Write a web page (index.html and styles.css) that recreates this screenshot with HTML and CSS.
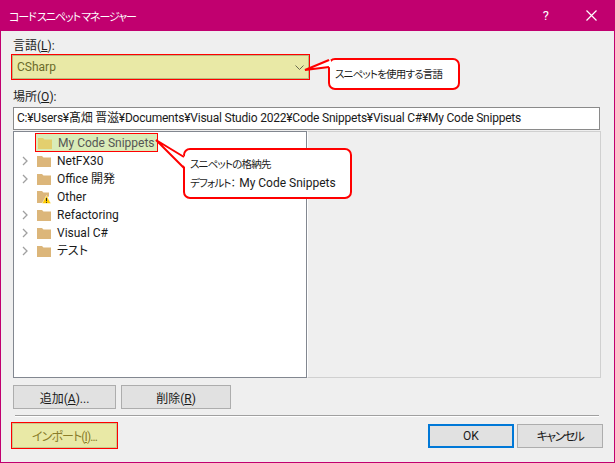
FILE: index.html
```html
<!DOCTYPE html>
<html>
<head>
    <title>コードスニペットマネージャー</title>
    <link rel="stylesheet" href="styles.css">
</head>
<body>
    <div class="window">
        <div class="title-bar">
            <span class="title">コード スニペット マネージャー</span>
            <span class="help">?</span>
            <svg class="close" width="11" height="11" viewBox="0 0 11 11"><path d="M0.5 0.5L10.5 10.500M10.5 0.5L0.5 10.500" stroke="#fff" stroke-width="1.2" fill="none"/></svg>
        </div>
        <div class="content">
            <div class="field-label">言語(<u>L</u>):</div>
            <div class="combo">
                <span>CSharp</span>
                <svg width="9" height="5" viewBox="0 0 9 5"><path d="M0.5 0.5L4.5 4.500L8.500 0.5" stroke="#6a6a50" fill="none"/></svg>
            </div>
            <div class="field-label place-label">場所(<u>O</u>):</div>
            <div class="path-box">C:¥Users¥髙畑 晋滋¥Documents¥Visual Studio 2022¥Code Snippets¥Visual C#¥My Code Snippets</div>
            <div class="panes">
                <div class="tree">
                    <div class="tree-row">
                        <span class="arrow"></span>
                        <span class="selected-node">
                            <svg class="folder" width="14" height="12" viewBox="0 0 14 12"><path d="M0 1H5L6.500 2.500H14V12H0Z" fill="#e3cf6e"/></svg>
                            My Code Snippets
                        </span>
                    </div>
                    <div class="tree-row">
                        <svg class="arrow" width="6" height="10" viewBox="0 0 6 10"><path d="M1 1L5 5L1 9" stroke="#a0a0a0" stroke-width="1.300" fill="none"/></svg>
                        <svg class="folder" width="14" height="12" viewBox="0 0 14 12"><path d="M0 1H5L6.500 2.500H14V12H0Z" fill="#dcb67a"/></svg>
                        <span>NetFX30</span>
                    </div>
                    <div class="tree-row">
                        <svg class="arrow" width="6" height="10" viewBox="0 0 6 10"><path d="M1 1L5 5L1 9" stroke="#a0a0a0" stroke-width="1.300" fill="none"/></svg>
                        <svg class="folder" width="14" height="12" viewBox="0 0 14 12"><path d="M0 1H5L6.500 2.500H14V12H0Z" fill="#dcb67a"/></svg>
                        <span>Office 開発</span>
                    </div>
                    <div class="tree-row">
                        <span class="arrow"></span>
                        <svg class="folder" width="14" height="14" viewBox="0 0 14 14"><path d="M0 1H5L6.500 2.500H12V6L7 13H0Z" fill="#dcb67a"/><path d="M9.500 5.500L14 13.500H5Z" fill="#fc0" stroke="#fff" stroke-width="0.5"/><path d="M9.500 8V11M9.500 11.800V12.800" stroke="#222" fill="none"/></svg>
                        <span>Other</span>
                    </div>
                    <div class="tree-row">
                        <svg class="arrow" width="6" height="10" viewBox="0 0 6 10"><path d="M1 1L5 5L1 9" stroke="#a0a0a0" stroke-width="1.300" fill="none"/></svg>
                        <svg class="folder" width="14" height="12" viewBox="0 0 14 12"><path d="M0 1H5L6.500 2.500H14V12H0Z" fill="#dcb67a"/></svg>
                        <span>Refactoring</span>
                    </div>
                    <div class="tree-row">
                        <svg class="arrow" width="6" height="10" viewBox="0 0 6 10"><path d="M1 1L5 5L1 9" stroke="#a0a0a0" stroke-width="1.300" fill="none"/></svg>
                        <svg class="folder" width="14" height="12" viewBox="0 0 14 12"><path d="M0 1H5L6.500 2.500H14V12H0Z" fill="#dcb67a"/></svg>
                        <span>Visual C#</span>
                    </div>
                    <div class="tree-row">
                        <svg class="arrow" width="6" height="10" viewBox="0 0 6 10"><path d="M1 1L5 5L1 9" stroke="#a0a0a0" stroke-width="1.300" fill="none"/></svg>
                        <svg class="folder" width="14" height="12" viewBox="0 0 14 12"><path d="M0 1H5L6.500 2.500H14V12H0Z" fill="#dcb67a"/></svg>
                        <span>テスト</span>
                    </div>
                </div>
                <div class="detail"></div>
            </div>
            <div class="tree-buttons">
                <button class="add-btn">追加(<u>A</u>)...</button>
                <button class="del-btn">削除(<u>R</u>)</button>
            </div>
            <div class="separator"></div>
            <div class="bottom-row">
                <button class="import-btn">インポート(<u>I</u>)...</button>
                <div class="ok-group">
                    <button class="ok-btn">OK</button>
                    <button class="cancel-btn">キャンセル</button>
                </div>
            </div>
        </div>

        <!-- callouts -->
        <div class="callout callout-lang">スニペットを使用する言語</div>
        <div class="callout callout-store">スニペットの格納先<br>デフォルト：<span class="callout-latin">My Code Snippets</span></div>
        <svg class="callout-lines" width="615" height="463" viewBox="0 0 615 463">
            <path d="M305 70L331 60V67Z" fill="#fff"/>
            <path d="M329 60L305 70L329 67" fill="none" stroke="#f00" stroke-width="2"/>
            <path d="M156 140L186 157V168Z" fill="#fff"/>
            <path d="M184 157L156 140L184 168" fill="none" stroke="#f00" stroke-width="2"/>
        </svg>
    </div>
</body>
</html>
```

FILE: styles.css
```css
* {
    box-sizing: border-box;
}

body {
    margin: 0;
    font-family: Roboto, "Noto Sans CJK JP", sans-serif;
    font-size: 12px;
    font-feature-settings: "palt";
    color: #1a1a1a;
}

u {
    text-underline-offset: 1px;
}

.window {
    position: relative;
    width: 615px;
    height: 463px;
    background: #efefef;
    border: 1px solid #c1006f;
    border-top: none;
    overflow: hidden;
}

.title-bar {
    display: flex;
    align-items: center;
    height: 31px;
    margin: 0 -1px;
    padding: 0 12px 0 9px;
    background: #c1006f;
    color: #fff;
}

.title {
    flex: 1;
    font-family: "Noto Sans CJK JP", sans-serif;
    font-size: 11px;
    letter-spacing: -1.1px;
}

.help {
    margin-right: 37px;
    font-size: 13px;
}

.close {
    margin-right: 6px;
}

.content {
    display: flex;
    flex-direction: column;
    padding: 7px 0 0 12px;
}

.field-label {
    height: 16px;
    line-height: 16px;
}

.combo {
    display: flex;
    align-items: center;
    justify-content: space-between;
    width: 299px;
    height: 26px;
    margin: 0 0 0 -2px;
    padding: 0 5px 0 5px;
    background: #e9e9a6;
    border: 1px solid #f00;
    box-shadow: inset 0 0 0 1px #b9b97f;
    color: #6b6b2a;
    font-size: 12px;
}

.place-label {
    margin-top: 9px;
}

.path-box {
    width: 587px;
    height: 23px;
    margin-top: 2px;
    padding: 0 3px;
    line-height: 20px;
    letter-spacing: -0.22px;
    background: #fff;
    border: 1px solid #8a8a8a;
    white-space: nowrap;
    overflow: hidden;
}

.panes {
    display: flex;
    width: 588px;
    height: 247px;
    margin-top: 1px;
}

.tree {
    width: 294px;
    padding-top: 2px;
    background: #fff;
    border: 1px solid #828790;
}

.detail {
    flex: 1;
    border: 1px solid #d0d0d0;
    border-left-color: #fff;
}

.tree-row {
    display: flex;
    align-items: center;
    height: 18px;
    padding-left: 8px;
    line-height: 18px;
    white-space: nowrap;
}

.arrow {
    width: 6px;
    margin-right: 9px;
}

.folder {
    flex: none;
    margin-right: 6px;
}

.selected-node {
    display: flex;
    align-items: center;
    height: 19px;
    margin: -1px 0 0 -2px;
    padding: 0 2px 0 2px;
    background: #d9ecb8;
    border: 1px solid #f00;
    color: #555;
}

button {
    font: inherit;
    font-feature-settings: "palt";
    color: #1a1a1a;
    background: #e1e1e1;
    border: 1px solid #adadad;
    padding: 0;
}

.tree-buttons {
    display: flex;
    gap: 5px;
    margin-top: 7px;
}

.add-btn {
    width: 103px;
    height: 24px;
}

.del-btn {
    width: 110px;
    height: 24px;
}

.separator {
    width: 584px;
    height: 2px;
    margin: 6px 0 0 2px;
    background: #a0a0a0;
    border-bottom: 1px solid #fff;
}

.bottom-row {
    display: flex;
    align-items: center;
    justify-content: space-between;
    width: 590px;
    margin-top: 5px;
}

.import-btn {
    width: 107px;
    height: 27px;
    margin-left: -2px;
    letter-spacing: -0.9px;
    background: #e9e9a6;
    border: 1px solid #f00;
    box-shadow: inset 0 0 0 1px #c9c98c;
    color: #8a7d2a;
}

.ok-group {
    display: flex;
    gap: 3px;
}

.ok-btn {
    width: 86px;
    height: 24px;
    border: 2px solid #0078d7;
}

.cancel-btn {
    width: 86px;
    height: 24px;
    letter-spacing: -1.5px;
}

.callout-lines {
    position: absolute;
    top: 0;
    left: -1px;
}

.callout {
    position: absolute;
    background: #fff;
    border: 2px solid #f00;
    border-radius: 7px;
    color: #1a1a1a;
    font-size: 10.500px;
    letter-spacing: -0.8px;
    white-space: nowrap;
}

.callout-latin {
    margin-left: 4px;
    font-size: 12px;
    letter-spacing: 0;
}

.callout-lang {
    top: 58px;
    left: 327px;
    width: 132px;
    height: 32px;
    padding: 6px 0 0 5px;
    line-height: 18px;
}

.callout-store {
    top: 148px;
    left: 182px;
    width: 169px;
    height: 51px;
    padding: 6px 0 0 5px;
    line-height: 18px;
}
```
